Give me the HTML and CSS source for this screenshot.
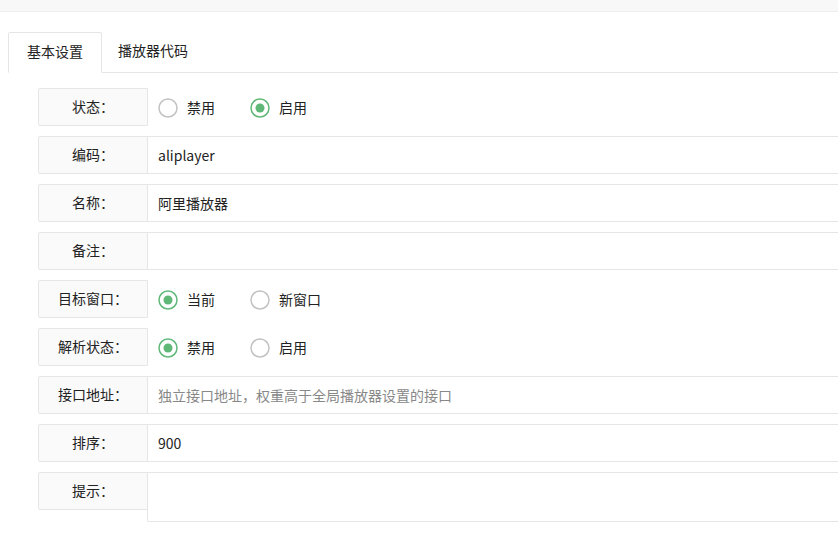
FILE: index.html
```html
<!DOCTYPE html>
<html lang="zh-CN">
<head>
    <meta charset="UTF-8">
    <meta name="viewport" content="width=device-width, initial-scale=1.0">
    <title>播放器设置</title>
    <link rel="stylesheet" href="styles.css">
</head>
<body>
    <div class="top-bar"></div>

    <div class="tab">
        <ul class="tab-title">
            <li class="tab-item active">基本设置</li>
            <li class="tab-item">播放器代码</li>
        </ul>

        <form class="form-pane">
            <div class="form-item">
                <label class="form-label">状态：</label>
                <div class="input-block radio-block">
                    <span class="radio"><svg viewBox="0 0 20 20"><circle cx="10" cy="10" r="9" class="ring"/></svg>禁用</span>
                    <span class="radio checked"><svg viewBox="0 0 20 20"><circle cx="10" cy="10" r="9" class="ring"/><circle cx="10" cy="10" r="4.5" class="dot"/></svg>启用</span>
                </div>
            </div>
            <div class="form-item">
                <label class="form-label">编码：</label>
                <div class="input-block"><input class="input" type="text" value="aliplayer"></div>
            </div>
            <div class="form-item">
                <label class="form-label">名称：</label>
                <div class="input-block"><input class="input" type="text" value="阿里播放器"></div>
            </div>
            <div class="form-item">
                <label class="form-label">备注：</label>
                <div class="input-block"><input class="input" type="text" value=""></div>
            </div>
            <div class="form-item">
                <label class="form-label">目标窗口：</label>
                <div class="input-block radio-block">
                    <span class="radio checked"><svg viewBox="0 0 20 20"><circle cx="10" cy="10" r="9" class="ring"/><circle cx="10" cy="10" r="4.5" class="dot"/></svg>当前</span>
                    <span class="radio"><svg viewBox="0 0 20 20"><circle cx="10" cy="10" r="9" class="ring"/></svg>新窗口</span>
                </div>
            </div>
            <div class="form-item">
                <label class="form-label">解析状态：</label>
                <div class="input-block radio-block">
                    <span class="radio checked"><svg viewBox="0 0 20 20"><circle cx="10" cy="10" r="9" class="ring"/><circle cx="10" cy="10" r="4.5" class="dot"/></svg>禁用</span>
                    <span class="radio"><svg viewBox="0 0 20 20"><circle cx="10" cy="10" r="9" class="ring"/></svg>启用</span>
                </div>
            </div>
            <div class="form-item">
                <label class="form-label">接口地址：</label>
                <div class="input-block"><input class="input" type="text" placeholder="独立接口地址，权重高于全局播放器设置的接口"></div>
            </div>
            <div class="form-item">
                <label class="form-label">排序：</label>
                <div class="input-block"><input class="input" type="text" value="900"></div>
            </div>
            <div class="form-item">
                <label class="form-label">提示：</label>
                <div class="input-block"><textarea class="textarea"></textarea></div>
            </div>
        </form>
    </div>
</body>
</html>
```

FILE: styles.css
```css
* {
    box-sizing: border-box;
}

body {
    margin: 0;
    font-family: "Microsoft YaHei", "Noto Sans CJK SC", "Noto Sans", sans-serif;
    font-size: 14px;
    color: #222;
    background-color: #fff;
    overflow: hidden;
}

.top-bar {
    height: 12px;
    background-color: #f8f8f8;
    border-bottom: 1px solid #eee;
}

.tab {
    margin: 20px -40px 0 8px;
}

.tab-title {
    display: flex;
    margin: 0;
    padding: 0;
    list-style: none;
    height: 41px;
    border-bottom: 1px solid #e6e6e6;
}

.tab-item {
    height: 41px;
    line-height: 37px;
    padding: 0 16px;
    cursor: pointer;
}

.tab-item.active {
    padding: 0 18px;
    background-color: #fff;
    border: 1px solid #e6e6e6;
    border-bottom-color: #fff;
    border-radius: 2px 2px 0 0;
    line-height: 36px;
}

.form-pane {
    padding: 15px 0 0 30px;
}

.form-item {
    display: flex;
    align-items: flex-start;
    margin-bottom: 10px;
}

.form-label {
    flex: none;
    width: 110px;
    height: 38px;
    line-height: 35px;
    text-align: center;
    background-color: #fafafa;
    border: 1px solid #e6e6e6;
    border-radius: 2px 0 0 2px;
}

.input-block {
    flex: 1;
    margin-left: -1px;
}

.input,
.textarea {
    display: block;
    width: 100%;
    height: 38px;
    padding: 0 10px;
    border: 1px solid #e6e6e6;
    border-radius: 0 2px 2px 0;
    font-family: inherit;
    font-size: 14px;
    color: #222;
    outline: none;
}

.input::placeholder {
    color: #888;
}

.textarea {
    height: 50px;
    resize: none;
    padding: 6px 10px;
}

.radio-block {
    display: flex;
    align-items: center;
    height: 38px;
    padding-left: 11px;
}

.radio {
    display: flex;
    align-items: center;
    margin-right: 35px;
    line-height: 18px;
    cursor: pointer;
}

.radio svg {
    width: 20px;
    height: 20px;
    margin: 0 9px 0 0;
    position: relative;
    top: 1px;
}

.radio .ring {
    fill: #fff;
    stroke: #c2c2c2;
    stroke-width: 1.5;
}

.radio.checked .ring {
    stroke: #5fb878;
}

.radio .dot {
    fill: #5fb878;
}
```
